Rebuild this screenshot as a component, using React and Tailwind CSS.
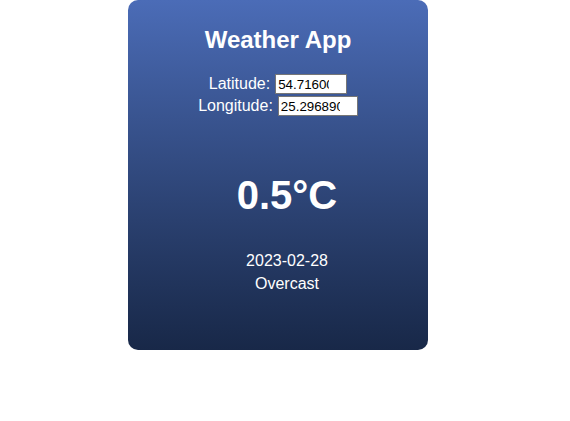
import { useState } from "react";

function CoordRow({ label, value, onChange, width }) {
  return (
    <div className="flex h-[20px] items-center justify-center gap-[5px]">
      <span className="text-[16px] leading-[18px]">{label}</span>
      <input
        type="number"
        value={value}
        onChange={(e) => onChange(e.target.value)}
        className={`h-[20px] ${width} border border-[#767676] bg-white px-[2px] py-[1px] text-[13.33px] text-black outline-none`}
      />
    </div>
  );
}

export default function App() {
  const [lat, setLat] = useState("54.716003");
  const [lon, setLon] = useState("25.296890");

  return (
    <div className="min-h-screen bg-white font-['Liberation_Sans',Arial,sans-serif]">
      <div className="flex w-[556px] justify-center">
        <div className="flex h-[350px] w-[300px] flex-col items-center rounded-[10px] bg-gradient-to-b from-[#4b6cb7] to-[#182848] pt-[26px] text-white">
          <h1 className="text-[24px] font-bold leading-[28px]">Weather App</h1>

          <div className="mt-[20px] flex flex-col gap-[2px]">
            <CoordRow label="Latitude:" value={lat} onChange={setLat} width="w-[72px]" />
            <CoordRow label="Longitude:" value={lon} onChange={setLon} width="w-[80px]" />
          </div>

          <div className="ml-[18px] mt-[56px] text-[40px] font-bold leading-[46px]">0.5°C</div>

          <div className="ml-[18px] mt-[31px] text-center text-[16px] leading-[23px]">
            <p>2023-02-28</p>
            <p>Overcast</p>
          </div>
        </div>
      </div>
    </div>
  );
}
